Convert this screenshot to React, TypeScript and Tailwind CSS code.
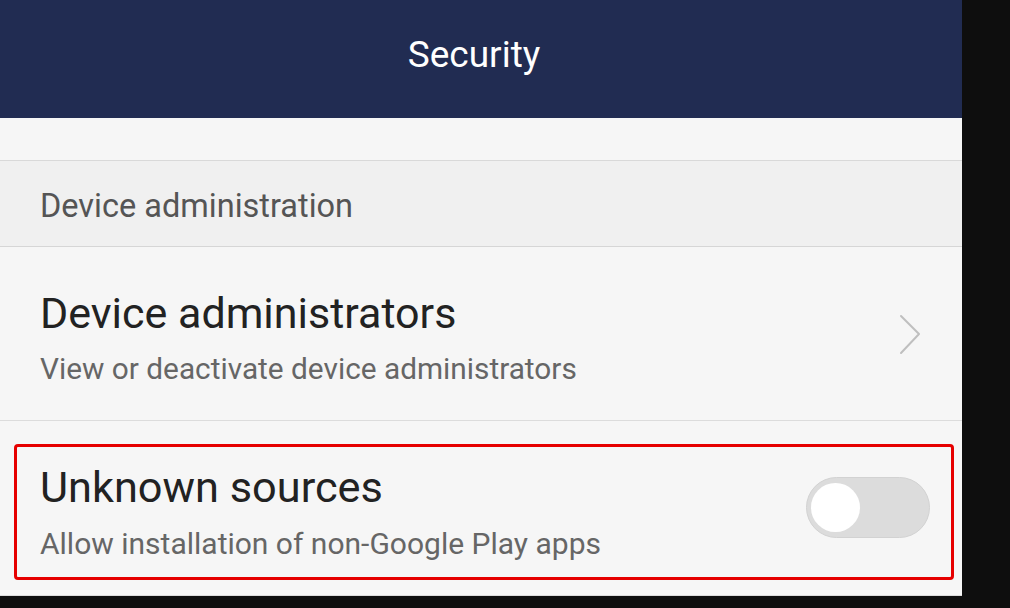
import React from 'react';

const Chevron: React.FC = () => (
  <svg width="24" height="42" viewBox="0 0 24 42" fill="none">
    <path d="M3 2 L21 20 L3 39" stroke="#bfbfbf" strokeWidth="2" strokeLinecap="round" strokeLinejoin="round" />
  </svg>
);

const Toggle: React.FC = () => (
  <div className="w-[124px] h-[61px] rounded-full bg-[#dcdcdc] border border-[#d2d2d2] flex items-center pl-[4px]">
    <div className="w-[49px] h-[49px] rounded-full bg-white" />
  </div>
);

export default function App() {
  return (
    <div className="w-[1010px] h-[608px] bg-[#0e0e0e] flex overflow-hidden font-['Roboto',sans-serif]">
      <div className="w-[962px] flex flex-col">
        {/* barre de titre */}
        <div className="h-[118px] bg-[#212c52] flex justify-center pt-[36px] pr-[14px]">
          <span className="text-white text-[37px] leading-none">Security</span>
        </div>

        <div className="h-[43px] bg-[#f6f6f6] border-b border-[#d9d9d9]" />

        <div className="h-[86px] bg-[#f0f0f0] border-b border-[#d6d6d6] pl-[40px] pt-[29px]">
          <span className="text-[32.5px] text-[#555555] leading-none">Device administration</span>
        </div>

        <div className="h-[174px] bg-[#f6f6f6] border-b border-[#dcdcdc] flex justify-between pl-[40px] pr-[40px]">
          <div className="flex flex-col gap-[19px] pt-[45px]">
            <span className="text-[43px] text-[#222222] leading-none">Device administrators</span>
            <span className="text-[29.8px] text-[#666666] leading-none">View or deactivate device administrators</span>
          </div>
          <div className="pt-[67px]">
            <Chevron />
          </div>
        </div>

        <div className="h-[175px] bg-[#f6f6f6] border-b border-[#dcdcdc] pt-[23px] pl-[14px] pr-[8px] pb-[15px]">
          <div className="h-full border-[3px] border-[#e60000] rounded-[4px] flex justify-between pl-[23px] pr-[21px]">
            <div className="flex flex-col gap-[20px] pt-[19px]">
              <span className="text-[43.3px] text-[#222222] leading-none">Unknown sources</span>
              <span className="text-[30px] text-[#666666] leading-none">Allow installation of non-Google Play apps</span>
            </div>
            <div className="pt-[30px]">
              <Toggle />
            </div>
          </div>
        </div>
      </div>
    </div>
  );
}
